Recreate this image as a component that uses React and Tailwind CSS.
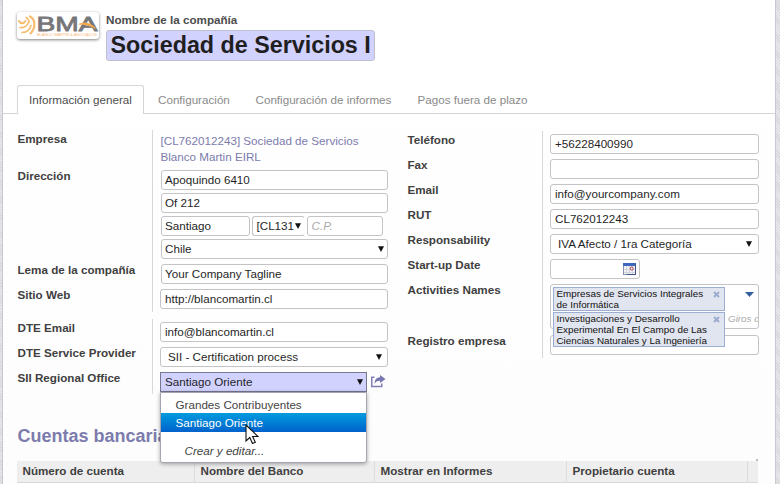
import React from "react";

const fieldBase = "h-[20px] rounded-[3px] border border-[#c4c4c6] bg-white text-[11.65px] leading-[18px] text-[#1f1f1f] whitespace-nowrap overflow-hidden";

function Caret() {
  return (
    <svg width="6" height="6" viewBox="0 0 6 6" className="shrink-0">
      <path d="M0 0.3h6L3 6z" fill="#111" />
    </svg>
  );
}

function Field({ children, className = "w-[209px] px-[4px]" }) {
  return <div className={`${fieldBase} ${className}`}>{children}</div>;
}

function Select({ children, className = "w-[209px] pl-[7px] pr-[4px]" }) {
  return (
    <div className={`${fieldBase} flex items-center justify-between ${className}`}>
      <span>{children}</span>
      <Caret />
    </div>
  );
}

function Row({ label, children, className = "h-[20px]" }) {
  return (
    <div className={`flex items-start ${className}`}>
      <div className="w-[135px] shrink-0 whitespace-nowrap text-[11.65px] font-bold leading-[12px] text-[#404040]">{label}</div>
      {children}
    </div>
  );
}

function Logo() {
  return (
    <div className="mt-[12px] h-[27px] w-[82px] rounded-[3px] bg-white shadow-[0_1px_3px_rgba(0,0,0,0.5)]">
      <svg width="82" height="27" viewBox="0 0 82 27">
        <g fill="none" stroke="#f6bd72" strokeLinecap="round">
          <path d="M2 9c1.500 3 4.500 3 6.500 0" strokeWidth="2" />
          <path d="M3 15.500c4 .5 7-1.500 8.500-5" strokeWidth="1.700" />
          <path d="M5 20.500c4.500 0 8-3 9-7" strokeWidth="1.700" />
          <path d="M9 5.500c2 1 3 2.500 3.200 5" strokeWidth="1.500" />
          <path d="M13 4.500c5.500 3 6 11 .5 17" strokeWidth="2.200" />
        </g>
        <text x="19.500" y="18.500" textLength="61" lengthAdjust="spacingAndGlyphs" fontFamily="Liberation Sans, sans-serif" fontSize="20" fill="#77777a" stroke="#77777a" strokeWidth=".8">BMA</text>
        <path d="M61 12.500c6-3.500 13-2.500 19 5-6-3.500-12-5-19-5z" fill="#f5aa50" />
        <text x="20" y="23.500" textLength="60" fontFamily="Liberation Sans, sans-serif" fontSize="4" fill="#f5b778">BLANCO MARTIN &amp; ASOCIADOS</text>
      </svg>
    </div>
  );
}

function CalendarIcon() {
  return (
    <svg width="13" height="12" viewBox="0 0 13 12">
      <rect x=".5" y=".5" width="12" height="11" fill="#f1f2f4" stroke="#8793ae" />
      <rect width="13" height="3" fill="#3d69bd" />
      <path d="M1 6.500h11M1 9.500h11M3.500 3v8M6.500 3v8M9.500 3v8" stroke="#c9ccd4" strokeWidth=".7" />
      <circle cx="8.700" cy="5.500" r="1.500" fill="#fff" stroke="#a83343" />
      <path d="M12.500 1v10.500H4" fill="none" stroke="#3e5488" />
    </svg>
  );
}

function OpenIcon() {
  return (
    <svg width="16" height="14" viewBox="0 0 16 14" className="ml-[3px] mt-[2px]">
      <path d="M4.500 3.250H1.750v9.250h10V9.500" fill="none" stroke="#817fb6" strokeWidth="1.500" />
      <path d="M10 1l5.500 4-5.500 4V6.700C7.500 6.500 6 7.500 4.500 9.700 4.700 5.500 6.500 3.500 10 3.300z" fill="#7977b0" />
    </svg>
  );
}

function Tag({ lines, className }) {
  return (
    <div className={`flex w-[172px] justify-between border border-[#9daed3] bg-[#e1e5ef] pl-[3px] pr-[4px] text-[9.85px] leading-[11px] text-[#111] ${className}`}>
      <div className="whitespace-nowrap">
        {lines.map((l) => <div key={l}>{l}</div>)}
      </div>
      <svg width="7" height="7" viewBox="0 0 7 7" className="mt-[3px] shrink-0">
        <path d="M1 1l5 5M6 1L1 6" stroke="#9cacd0" strokeWidth="2" />
      </svg>
    </div>
  );
}

function Dropdown() {
  return (
    <div className="absolute left-0 top-[20px] z-20 h-[71px] w-[207px] rounded-b-[3px] border border-[#a5a5b0] bg-white pt-[4px] text-[11.65px] text-[#444] shadow-[0_1px_4px_rgba(0,0,0,0.35)]">
      <div className="h-[16px] pl-[15px] leading-[15px]">Grandes Contribuyentes</div>
      <div className="h-[19px] bg-linear-to-b from-[#089bde] to-[#0062cc] pl-[15px] leading-[20px] text-white">Santiago Oriente</div>
      <div className="mt-[10px] pl-[24px] italic leading-[18px]">Crear y editar...</div>
      <svg width="14" height="21" viewBox="0 0 14 21" className="absolute left-[84px] top-[31px]">
        <path d="M1 1v16l3.800-3.500 2.700 6 2.800-1.200-2.700-5.800H13z" fill="#fff" stroke="#111" strokeWidth="1.100" />
      </svg>
    </div>
  );
}

function LeftGroup() {
  return (
    <div className="flex w-[390px] flex-col">
      <div className="relative mt-[16px] flex h-[182px] flex-col">
        <div className="absolute bottom-0 left-[134px] top-0 w-px bg-[#d8d8d8]" />
        <Row label="Empresa" className="mt-[3px] h-[37px]">
          <div className="pl-[8px] text-[11.65px] leading-[16px] text-[#7c7bad]">
            [CL762012243] Sociedad de Servicios<br />Blanco Martin EIRL
          </div>
        </Row>
        <Row label="Dirección" className="h-[94px]">
          <div className="ml-[8px] flex flex-col gap-[3px]">
            <Field className="w-[227px] pl-[3.5px]">Apoquindo 6410</Field>
            <Field className="w-[227px] pl-[3.5px]">Of 212</Field>
            <div className="flex gap-[2px]">
              <Field className="w-[89px] pl-[3.5px]">Santiago</Field>
              <Select className="w-[53px] pl-[4px] pr-[3px] border-r-transparent">[CL131</Select>
              <Field className="w-[76px] px-[4px] italic text-[#aaa]!">C.P.</Field>
            </div>
            <Select className="w-[227px] pl-[3.5px] pr-[3px]">Chile</Select>
          </div>
        </Row>
        <Row label="Lema de la compañía" className="h-[25px]">
          <Field className="ml-[8px] w-[227px] pl-[3.5px]">Your Company Tagline</Field>
        </Row>
        <Row label="Sitio Web">
          <Field className="ml-[7px] w-[228px] pl-[4.5px]">http://blancomartin.cl</Field>
        </Row>
      </div>
      <div className="relative mt-[7px] flex h-[75px] flex-col gap-[5px] pt-[3px]">
        <div className="absolute bottom-0 left-[134px] top-0 w-px bg-[#d8d8d8]" />
        <Row label="DTE Email"><Field className="ml-[7px] w-[228px] pl-[4.5px]">info@blancomartin.cl</Field></Row>
        <Row label="DTE Service Provider"><Select className="ml-[7px] w-[228px] pl-[7.5px] pr-[5px]">SII - Certification process</Select></Row>
        <Row label="SII Regional Office">
          <div className="relative ml-[7px] w-[207px]">
            <Select className="w-[207px] rounded-none! border-[#777790]! bg-[#d2d2ff]! pl-[4.5px] pr-[3px]">Santiago Oriente</Select>
            <Dropdown />
          </div>
          <OpenIcon />
        </Row>
      </div>
    </div>
  );
}

function RightGroup() {
  return (
    <div className="relative mt-[17px] flex h-[227px] flex-col gap-[5px] pt-[3px]">
      <div className="absolute bottom-0 left-[134px] top-0 w-px bg-[#d8d8d8]" />
      {[["Teléfono", "+56228400990"], ["Fax", ""], ["Email", "info@yourcompany.com"], ["RUT", "CL762012243"]].map(([label, value]) => (
        <Row key={label} label={label}><Field className="ml-[7px] w-[209px] pl-[4.5px]">{value}</Field></Row>
      ))}
      <Row label="Responsability"><Select className="ml-[7px] w-[209px] pl-[7.5px] pr-[5.5px]">IVA Afecto / 1ra Categoría</Select></Row>
      <Row label="Start-up Date">
        <Field className="ml-[7px] flex w-[90px] items-center justify-end pr-[3px]"><CalendarIcon /></Field>
      </Row>
      <Row label="Activities Names" className="z-10 h-[46px]">
        <div className="ml-[7px] flex h-[45px] w-[209px] rounded-[3px] border border-[#c4c4c6] bg-white pl-[2px] pt-[2px]">
          <div className="flex flex-col gap-px">
            <Tag className="h-[24px]" lines={["Empresas de Servicios Integrales", "de Informática"]} />
            <Tag className="h-[35px]" lines={["Investigaciones y Desarrollo", "Experimental En El Campo de Las", "Ciencias Naturales y La Ingeniería"]} />
          </div>
          <div className="flex min-w-0 flex-1 flex-col overflow-hidden pl-[3px]">
            <svg width="9" height="5" viewBox="0 0 9 5" className="ml-[17px] mt-[5px] shrink-0"><path d="M0 0h9L4.500 5z" fill="#345f9f" /></svg>
            <div className="mt-[16px] whitespace-nowrap pl-[0.5px] text-[9.85px] italic leading-[12px] text-[#aaa]">Giros de</div>
          </div>
        </div>
      </Row>
      <Row label="Registro empresa"><Field className="ml-[7px] w-[209px]" /></Row>
    </div>
  );
}

export default function App() {
  return (
    <div className="flex h-[484px] w-[780px] overflow-hidden bg-[repeating-linear-gradient(45deg,#d8d8dc_0px,#d8d8dc_1px,#e9e9eb_1px,#e9e9eb_2px)] pl-[2px] font-['Liberation_Sans',Arial,sans-serif]">
      <div className="flex h-full w-[774px] shrink-0 flex-col border-x border-[#c8c8d3] bg-linear-to-b from-white to-[#fdfdfd]">
        <header className="flex h-[85px] shrink-0 pl-[14px]">
          <Logo />
          <div className="ml-[7px] pt-[14px]">
            <div className="text-[11.65px] font-bold leading-[12px] text-[#4c4c4c]">Nombre de la compañía</div>
            <div className="mt-[4px] h-[31px] w-[269px] rounded-[3px] border border-[#c0c0cc] bg-[#d2d2ff] px-[3.5px]">
              <div className="overflow-hidden whitespace-nowrap text-[23.3px] font-bold leading-[28px] text-[#1f1f1f]">Sociedad de Servicios Integrales</div>
            </div>
          </div>
        </header>
        <nav className="flex h-[29px] shrink-0 border-b border-[#d5d5d5] pl-[14px] text-[11.65px] leading-[29px] text-[#8a8a8a]">
          <div className="h-[29px] w-[127px] rounded-t-[3px] border border-b-0 border-[#d5d5d5] bg-white pl-[11px] leading-[28px] text-[#4c4c4c]">Información general</div>
          <div className="ml-[14px] w-[97.500px]">Configuración</div>
          <div className="w-[162px]">Configuración de informes</div>
          <div>Pagos fuera de plazo</div>
        </nav>
        <main className="flex shrink-0 pl-[14.5px]">
          <LeftGroup />
          <RightGroup />
        </main>
        <h2 className="mt-[31px] shrink-0 pl-[14.5px] text-[18px] font-bold leading-[22px] text-[#7c7bad]">Cuentas bancarias</h2>
        <div className="ml-[14px] mt-[14px] flex h-[22px] w-[741px] shrink-0 border-b border-[#d8d8d8] bg-[#eee] text-[11.65px] font-bold leading-[20px] text-[#404040]">
          <div className="w-[178px] border-r border-[#dcdcdc] pl-[5.5px]">Número de cuenta</div>
          <div className="w-[180px] border-r border-[#dcdcdc] pl-[5.5px]">Nombre del Banco</div>
          <div className="w-[192px] border-r border-[#dcdcdc] pl-[5.5px]">Mostrar en Informes</div>
          <div className="w-[181px] border-r border-[#dcdcdc] pl-[5.5px]">Propietario cuenta</div>
          <div className="relative flex-1"><span className="absolute -top-[2px] right-0 h-[2px] w-[2px] bg-[#bbb]" /></div>
        </div>
      </div>
    </div>
  );
}
